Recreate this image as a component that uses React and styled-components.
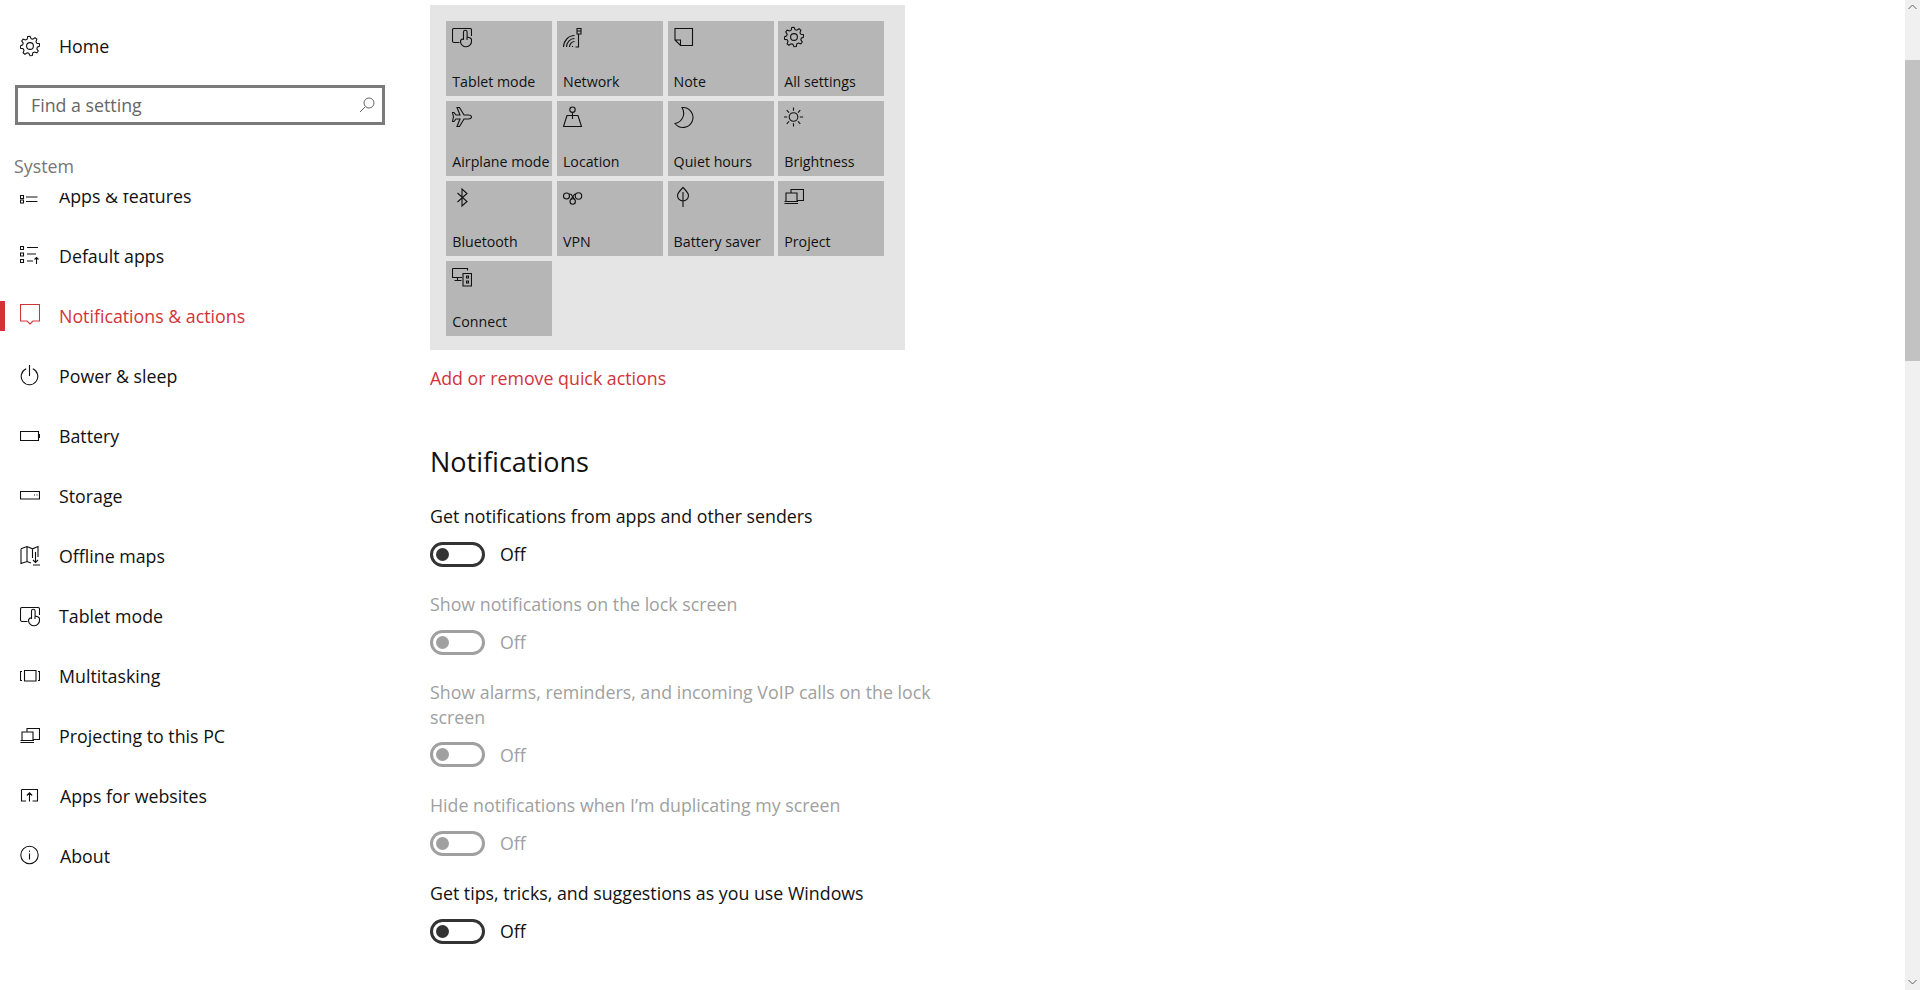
import React from 'react';
import styled, { createGlobalStyle } from 'styled-components';

const GlobalStyle = createGlobalStyle`
  html, body {
    margin: 0;
    height: 100%;
    overflow: hidden;
    background: #fff;
  }
  * {
    box-sizing: border-box;
  }
`;

const ACCENT = '#d13438';
const FONT = '"Open Sans", "Noto Sans", "Liberation Sans", sans-serif';

const Page = styled.div`
  display: flex;
  height: 990px;
  overflow: hidden;
  font-family: ${FONT};
  font-size: 17.8px;
  color: #111;
`;

const Sidebar = styled.aside`
  display: flex;
  flex-direction: column;
  flex: 0 0 430px;
  height: 100%;
`;

const HomeRow = styled.div`
  display: flex;
  align-items: center;
  gap: 19px;
  height: 60px;
  margin-top: 16px;
  padding-left: 20px;
`;

const SearchBox = styled.div`
  display: flex;
  align-items: center;
  justify-content: space-between;
  width: 370px;
  height: 40px;
  margin: 9px 0 0 15px;
  padding: 0 7px 0 13px;
  border: 3px solid #7a7a7a;
  color: #666;
`;

const GroupTitle = styled.div`
  height: 28px;
  margin: 27px 0 13px 14px;
  color: #767676;
  line-height: 28px;
`;

const NavClip = styled.div`
  flex: 1;
  overflow: hidden;
`;

const NavList = styled.nav`
  display: flex;
  flex-direction: column;
  margin-top: -27px;
`;

const NavRow = styled.div`
  position: relative;
  display: flex;
  align-items: center;
  gap: ${({ $wide }) => ($wide ? '20px' : '19px')};
  height: 60px;
  padding-left: 20px;
  color: ${({ $active }) => ($active ? ACCENT : '#111')};

  &::before {
    content: '';
    display: ${({ $active }) => ($active ? 'block' : 'none')};
    position: absolute;
    left: 0;
    top: 15px;
    width: 5px;
    height: 30px;
    background: ${ACCENT};
  }
`;

const Main = styled.main`
  flex: 1;
  min-width: 0;
  padding-top: 5px;
`;

const QuickPanel = styled.div`
  display: grid;
  grid-template-columns: repeat(4, 106px);
  grid-auto-rows: 75px;
  column-gap: 4.67px;
  row-gap: 5px;
  width: 475px;
  height: 345px;
  padding: 16px 0 0 16.3px;
  background: #e5e5e5;
`;

const Tile = styled.div`
  display: flex;
  flex-direction: column;
  justify-content: space-between;
  padding: 4px 0 3px 6px;
  background: #b6b6b6;
  font-size: 14.2px;
  line-height: 22px;
  color: #111;
  white-space: nowrap;
`;

const QuickLink = styled.div`
  margin-top: 16px;
  color: ${ACCENT};
  line-height: 24px;
`;

const SectionTitle = styled.h2`
  margin: 54px 0 0;
  font-size: 27px;
  font-weight: 400;
  line-height: 36px;
`;

const SettingList = styled.div`
  margin-top: 24px;
  width: 510px;
`;

const Setting = styled.div`
  margin-bottom: 25.7px;
  color: ${({ $disabled }) => ($disabled ? '#a0a0a0' : '#111')};
`;

const SettingLabel = styled.div`
  margin-bottom: 13px;
  line-height: 24.5px;
`;

const ToggleRow = styled.div`
  display: flex;
  align-items: center;
  gap: 15px;
  height: 25px;
`;

const Toggle = styled.div`
  position: relative;
  width: 55px;
  height: 25px;
  border: 3px solid ${({ $disabled }) => ($disabled ? '#a0a0a0' : '#333')};
  border-radius: 13px;

  &::after {
    content: '';
    position: absolute;
    left: 3px;
    top: 3px;
    width: 13px;
    height: 13px;
    border-radius: 50%;
    background: ${({ $disabled }) => ($disabled ? '#a0a0a0' : '#333')};
  }
`;

const ScrollTrack = styled.div`
  display: flex;
  flex-direction: column;
  flex: 0 0 15px;
  height: 100%;
  background: #f0f0f0;
`;

const ScrollArrow = styled.div`
  display: flex;
  justify-content: center;
  height: ${({ $down }) => ($down ? 'auto' : '60px')};
  margin-top: ${({ $down }) => ($down ? 'auto' : '0')};
  padding: ${({ $down }) => ($down ? '0 0 5px' : '4px 0 0')};
`;

const ScrollThumb = styled.div`
  height: 301px;
  background: #c2c2c2;
`;

const IconSvg = styled.svg`
  display: block;
  flex: none;
  width: 20px;
  height: 24px;
  fill: none;
  stroke: currentColor;
  stroke-width: 1.1;
`;

const gearPath = (() => {
  const cx = 10;
  const cy = 12;
  const pts = [];
  for (let i = 0; i < 8; i++) {
    const a = (i * Math.PI) / 4 - Math.PI / 8;
    const step = Math.PI / 4;
    [
      [7.4, 0],
      [9.7, step * 0.2],
      [9.7, step * 0.5],
      [7.4, step * 0.7]
    ].forEach(([r, da]) => {
      pts.push(`${(cx + r * Math.cos(a + da)).toFixed(2)} ${(cy + r * Math.sin(a + da)).toFixed(2)}`);
    });
  }
  return `M${pts.join('L')}Z`;
})();

const sunRays = [0, 1, 2, 3, 4, 5, 6, 7].map((i) => {
  const a = (i * Math.PI) / 4;
  const p = (r) => `${(9.5 + r * Math.cos(a)).toFixed(2)} ${(12 + r * Math.sin(a)).toFixed(2)}`;
  return `M${p(6.3)}L${p(9.6)}`;
}).join('');

const glyphs = {
  gear: <><path d={gearPath} /><circle cx="10" cy="12" r="3.4" /></>,
  apps: <path d="M.5 11.500h3v3h-3zM.5 16h3v3h-3zM6 13h11.500M6 17.500h11.500" />,
  defaults: <path d="M.5 2.500h3v3h-3zM.5 9h3v3h-3zM.5 15.500h3v3h-3zM7 3.500h11M7 10h9M7 17h6M16.500 20v-6.500M14.500 15.500l2-2 2 2" />,
  bubble: <path d="M.5.5h19v16.500h-6.500l-3 3-3-3H.5z" />,
  power: <path d="M6.200 4.800a8.300 8.300 0 1 0 6.600 0M9.500 1v11" />,
  battery: <path d="M.5 7.500h18v9H.5zM18.500 10.500h1v3h-1z" />,
  storage: <path d="M.5 7.500h19v7.500H.5zM14 11h1M16.500 11h1" />,
  map: <path d="M1 4.800 7 2.500l5.500 2.300L18 2.500V13M1 4.800v14.700l6-2 4 1.600M7 2.500v15M12.500 4.800V14M15.500 8v10.500M13 16l2.500 2.500L18 16M13 21h7" />,
  tablet: <path d="M7.500 17.500H2Q.5 17.500.5 16V5Q.5 3.500 2 3.500h16q1.500 0 1.500 1.500v6M11.500 15V7a1.800 1.800 0 0 1 3.600 0v5l2.700.700q1.700.500 1.700 2.300V16a5.500 5.500 0 0 1-11 .600c0-1.600.700-2.600 3-2.800M15 12.500V15" />,
  multitask: <path d="M4.500 6.500h11.500v10.500H4.500zM2 7.500H.5v9H2M18 7.500h1.500v9H18" />,
  project: <path d="M7 7.500V4.500h12.500v11H13.500M2 16V8h11v8M.5 18.500h13.500M.5 16.500h13.500" />,
  websites: <path d="M1.500 5.500h16v11.500h-5M6 17H1.500V5.500M9.500 17.500V9M6.800 11.500 9.500 8.800l2.700 2.700" />,
  info: <><circle cx="9.500" cy="11" r="8.700" /><path d="M9.500 9.500v6M9.500 6.500v1.200" /></>,
  network: <path d="M.5 22C.5 16 5.500 10.500 11.500 10.500M3.500 22c0-4.500 3.500-8.500 8-8.500M6.500 22c0-3 2.500-5.500 5-5.500M9.500 21v1M15.500 9v13h-3M14 3.500h4v5.500h-4zM14 6h4" />,
  note: <path d="M1 3.500h17.500V20.500H6.500L1 15zM1 15h5.500v5.500" />,
  plane: <path d="M19.500 12c0-1-1-2-3-2H12L7.500 2.500H5L8 10H4L2 7.500H.5L1.500 12 .5 16.500H2L4 14h4L5 21.500h2.500L12 14h4.500c2 0 3-1 3-2z" />,
  location: <><circle cx="9.500" cy="4.700" r="2.700" /><path d="M9.500 7.400V14M.5 21.500 4 10.500h11l3.500 11z" /></>,
  moon: <path d="M8 2.500A10 10 0 1 1 1 18.500 10.500 10.500 0 0 0 8 2.500z" />,
  sun: <><circle cx="9.500" cy="12" r="4.300" /><path d={sunRays} /></>,
  bluetooth: <path d="M5.500 8 15 16.500 10 21V4l5 4.500L5.500 17" />,
  vpn: <><circle cx="3.500" cy="11" r="3" /><circle cx="15.500" cy="11" r="3.200" /><circle cx="9.700" cy="16.500" r="2.700" /><path d="M6 9.200h2l3.500 5.200M13 9.200h-1.500L8 14.400" /></>,
  leaf: <path d="M9 2.500C5 6.500 3.500 8.500 3.500 10.500a5.500 5.500 0 0 0 11 0C14.500 8.500 13 6.500 9 2.500zM9 7v15" />,
  connect: <path d="M.5 3.500h15v2M.5 3.500v9h9.500M5.500 12.500v2.500M2.500 15.500h7M11 8.500h8.500v12.500H11zM14.500 11h2v2h-2zM14.500 16h2v2h-2z" />
};

const Icon = ({ name }) => (
  <IconSvg viewBox="0 0 20 24">{glyphs[name]}</IconSvg>
);

const navItems = [
  { icon: 'apps', label: 'Apps & features' },
  { icon: 'defaults', label: 'Default apps' },
  { icon: 'bubble', label: 'Notifications & actions', active: true },
  { icon: 'power', label: 'Power & sleep' },
  { icon: 'battery', label: 'Battery' },
  { icon: 'storage', label: 'Storage' },
  { icon: 'map', label: 'Offline maps' },
  { icon: 'tablet', label: 'Tablet mode' },
  { icon: 'multitask', label: 'Multitasking' },
  { icon: 'project', label: 'Projecting to this PC' },
  { icon: 'websites', label: 'Apps for websites', wide: true },
  { icon: 'info', label: 'About', wide: true }
];

const tiles = [
  ['tablet', 'Tablet mode'],
  ['network', 'Network'],
  ['note', 'Note'],
  ['gear', 'All settings'],
  ['plane', 'Airplane mode'],
  ['location', 'Location'],
  ['moon', 'Quiet hours'],
  ['sun', 'Brightness'],
  ['bluetooth', 'Bluetooth'],
  ['vpn', 'VPN'],
  ['leaf', 'Battery saver'],
  ['project', 'Project'],
  ['connect', 'Connect']
];

const settings = [
  ['Get notifications from apps and other senders', false],
  ['Show notifications on the lock screen', true],
  ['Show alarms, reminders, and incoming VoIP calls on the lock screen', true],
  ['Hide notifications when I\u2019m duplicating my screen', true],
  ['Get tips, tricks, and suggestions as you use Windows', false]
];

const App = () => (
  <>
    <GlobalStyle />
    <Page>
      <Sidebar>
        <HomeRow>
          <Icon name="gear" />
          Home
        </HomeRow>
        <SearchBox>
          Find a setting
          <svg width="16" height="16" viewBox="0 0 16 16" fill="none" stroke="#666" strokeWidth="1">
            <circle cx="10" cy="6" r="5" />
            <path d="M6.500 9.500 1 15" />
          </svg>
        </SearchBox>
        <GroupTitle>System</GroupTitle>
        <NavClip>
          <NavList>
            {navItems.map(({ icon, label, active, wide }) => (
              <NavRow key={label} $active={active} $wide={wide}>
                <Icon name={icon} />
                {label}
              </NavRow>
            ))}
          </NavList>
        </NavClip>
      </Sidebar>
      <Main>
        <QuickPanel>
          {tiles.map(([icon, label]) => (
            <Tile key={label}>
              <Icon name={icon} />
              {label}
            </Tile>
          ))}
        </QuickPanel>
        <QuickLink>Add or remove quick actions</QuickLink>
        <SectionTitle>Notifications</SectionTitle>
        <SettingList>
          {settings.map(([label, disabled]) => (
            <Setting key={label} $disabled={disabled}>
              <SettingLabel>{label}</SettingLabel>
              <ToggleRow>
                <Toggle $disabled={disabled} />
                Off
              </ToggleRow>
            </Setting>
          ))}
        </SettingList>
      </Main>
      <ScrollTrack>
        <ScrollArrow>
          <svg width="9" height="6" viewBox="0 0 9 6" fill="none" stroke="#606060" strokeWidth="1">
            <path d="M.5 5 4.500 1l4 4" />
          </svg>
        </ScrollArrow>
        <ScrollThumb />
        <ScrollArrow $down>
          <svg width="9" height="6" viewBox="0 0 9 6" fill="none" stroke="#606060" strokeWidth="1">
            <path d="M.5 1 4.500 5l4-4" />
          </svg>
        </ScrollArrow>
      </ScrollTrack>
    </Page>
  </>
);

export default App;
